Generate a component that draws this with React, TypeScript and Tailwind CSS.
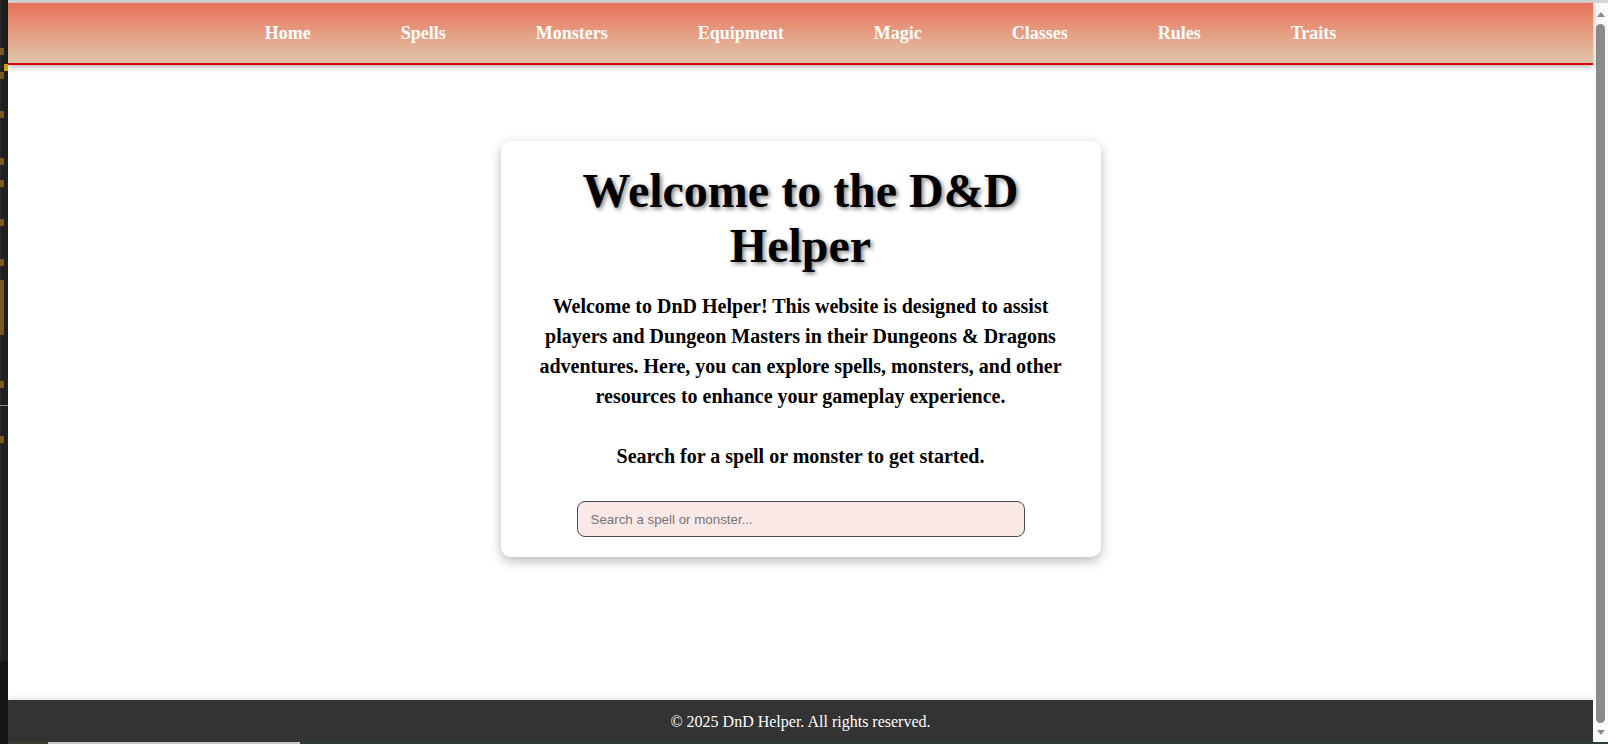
import React from "react";

const navItems = ["Home", "Spells", "Monsters", "Equipment", "Magic", "Classes", "Rules", "Traits"];

// orange marks on the editor's side strip (top offset, height)
const marks: [number, number][] = [
  [48, 7], [72, 7], [111, 7], [158, 7], [180, 7], [219, 7], [259, 7], [280, 55], [381, 7], [436, 7],
];

const SideStrip = () => (
  <div className="relative w-[8px] h-full shrink-0 bg-[#1f1f1f]">
    <div className="absolute left-0 top-0 w-[1px] h-full bg-[#2c2c2c]" />
    {marks.map(([top, h], i) => (
      <div
        key={i}
        className="absolute left-0 w-[4px] bg-[#7a5a22]"
        style={{ top, height: h }}
      />
    ))}
    <div className="absolute left-[4px] top-[64px] w-[4px] h-[7px] bg-[#d4a50c]" />
    <div className="absolute left-0 top-[405px] w-[8px] h-[1px] bg-[#8a8a8a]" />
    <div className="absolute left-0 top-[661px] w-[8px] h-[83px] bg-[#161616]" />
  </div>
);

const Scrollbar = () => (
  <div className="w-[15px] shrink-0 bg-[#fafafa] flex flex-col items-center">
    <div className="mt-[9px] w-0 h-0 border-l-[4px] border-r-[4px] border-b-[5px] border-l-transparent border-r-transparent border-b-[#8b8b8b]" />
    <div className="mt-[7px] w-[9px] flex-1 rounded-full bg-[#8b8b8b]" />
    <div className="mt-[7px] mb-[7px] w-0 h-0 border-l-[4px] border-r-[4px] border-t-[5px] border-l-transparent border-r-transparent border-t-[#8b8b8b]" />
  </div>
);

export default function App() {
  return (
    <div className="w-[1608px] h-[744px] overflow-hidden flex bg-white font-['Liberation_Serif','Times_New_Roman',serif]">
      <SideStrip />
      <div className="flex-1 flex flex-col">
        <div className="h-[3px] bg-[#d4d4d4]" />
        <div className="flex-1 flex min-h-0">
          <div className="flex-1 flex flex-col min-w-0">
            <header className="relative z-10 h-[62px] border-b-2 border-[#e00000] bg-gradient-to-b from-[#e76f59] to-[#dec7ab] shadow-[0_2px_6px_rgba(0,0,0,0.3)] flex items-center justify-center gap-[90px]">
              {navItems.map((item) => (
                <a key={item} href="#" className="text-white font-bold text-[18px] leading-none">
                  {item}
                </a>
              ))}
            </header>

            <main className="flex-1 flex justify-center pt-[76px]">
              <div className="w-[600px] h-fit rounded-[10px] bg-white px-[20px] pt-[22px] pb-[20px] shadow-[0_4px_12px_rgba(0,0,0,0.28)] text-center">
                <h1 className="text-[48px] leading-[55px] font-bold text-black [text-shadow:2px_2px_4px_rgba(0,0,0,0.5)]">
                  Welcome to the D&amp;D Helper
                </h1>
                <p className="mt-[18px] px-[18px] text-[20px] leading-[30px] font-bold text-black">
                  Welcome to DnD Helper! This website is designed to assist players and Dungeon Masters in their Dungeons &amp; Dragons adventures. Here, you can explore spells, monsters, and other resources to enhance your gameplay experience.
                  <br />
                  <br />
                  Search for a spell or monster to get started.
                </p>
                <div className="mt-[30px] flex justify-center">
                  <input
                    type="text"
                    placeholder="Search a spell or monster..."
                    className="w-[448px] h-[36px] rounded-[8px] border border-[#4a4a4a] bg-[#fbe9e7] pl-[13px] text-[13.33px] font-['Liberation_Sans',Arial,sans-serif] placeholder:text-[#757575] outline-none"
                  />
                </div>
              </div>
            </main>

            <footer className="h-[42px] bg-[#333333] shadow-[0_-2px_5px_rgba(0,0,0,0.12)] flex items-center justify-center text-white text-[16px] pt-[1px]">
              © 2025 DnD Helper. All rights reserved.
            </footer>
          </div>
          <Scrollbar />
        </div>
        <div className="h-[2px] flex bg-[#2f3a3c]">
          <div className="w-[40px] bg-[#3b3f2c]" />
          <div className="w-[252px] bg-[#c8c8c8]" />
        </div>
      </div>
    </div>
  );
}
